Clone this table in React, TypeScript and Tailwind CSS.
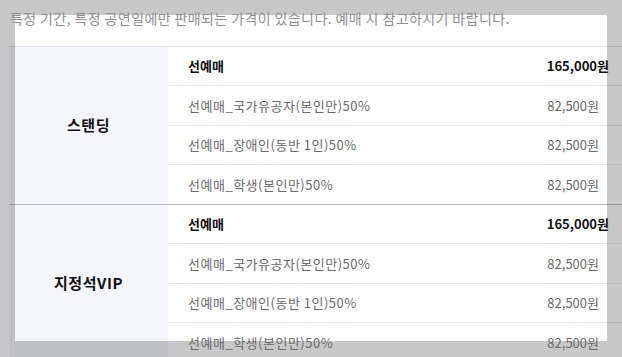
const groups = [
  { name: "스탠딩", items: ["선예매_국가유공자(본인만)50%", "선예매_장애인(동반 1인)50%", "선예매_학생(본인만)50%"] },
  { name: "지정석VIP", items: ["선예매_국가유공자(본인만)50%", "선예매_장애인(동반 1인)50%", "선예매_학생(본인만)50%"] },
];

export default function App() {
  return (
    <div
      className="relative h-[357px] w-full overflow-hidden bg-white"
      style={{ fontFamily: '"Noto Sans CJK KR", "Noto Sans", sans-serif' }}
    >
      <p className="relative z-20 mt-[8px] pl-[10px] text-[14px] leading-[20px] tracking-[0.4px] text-[#8f8f8f]">
        특정 기간, 특정 공연일에만 판매되는 가격이 있습니다. 예매 시 참고하시기 바랍니다.
      </p>

      <div className="ml-[9px] mt-[18px] border-t border-[#e0e3e8]">
        {groups.map((g) => (
          <div key={g.name} className="flex border-b border-[#b9bcc4]">
            <div className="flex w-[159px] items-center justify-center bg-[#f5f6fa]">
              <span className="relative z-20 text-[15px] font-bold tracking-[0.6px] text-[#111]">{g.name}</span>
            </div>
            <div className="flex flex-1 flex-col">
              <div className="flex h-[39.25px] items-center justify-between border-b border-[#e4e6eb] pl-[20px] pr-[13px] text-[13px] font-bold text-[#111]">
                <span className="relative z-20">선예매</span>
                <span className="relative z-20">165,000원</span>
              </div>
              {g.items.map((label, i) => (
                <div
                  key={label}
                  className={
                    i < g.items.length - 1
                      ? "flex h-[39.25px] items-center justify-between border-b border-[#e4e6eb] pl-[20px] pr-[23px] text-[13px] text-[#6b6b6b]"
                      : "flex h-[39.25px] items-center justify-between pl-[20px] pr-[23px] text-[13px] text-[#6b6b6b]"
                  }
                >
                  <span className="relative z-20 tracking-[0.5px]">{label}</span>
                  <span className="relative z-20">82,500원</span>
                </div>
              ))}
            </div>
          </div>
        ))}
      </div>

      {/* dim frame around the highlighted area */}
      <div className="pointer-events-none absolute left-0 right-0 top-0 z-10 h-[15px] bg-[rgba(0,0,0,0.216)]" />
      <div className="pointer-events-none absolute bottom-0 left-0 right-0 top-[341px] z-10 bg-[rgba(0,0,0,0.216)]" />
      <div className="pointer-events-none absolute left-0 top-[15px] z-10 h-[326px] w-[15px] bg-[rgba(0,0,0,0.216)]" />
      <div className="pointer-events-none absolute left-[607px] right-0 top-[15px] z-10 h-[326px] bg-[rgba(0,0,0,0.216)]" />
    </div>
  );
}
